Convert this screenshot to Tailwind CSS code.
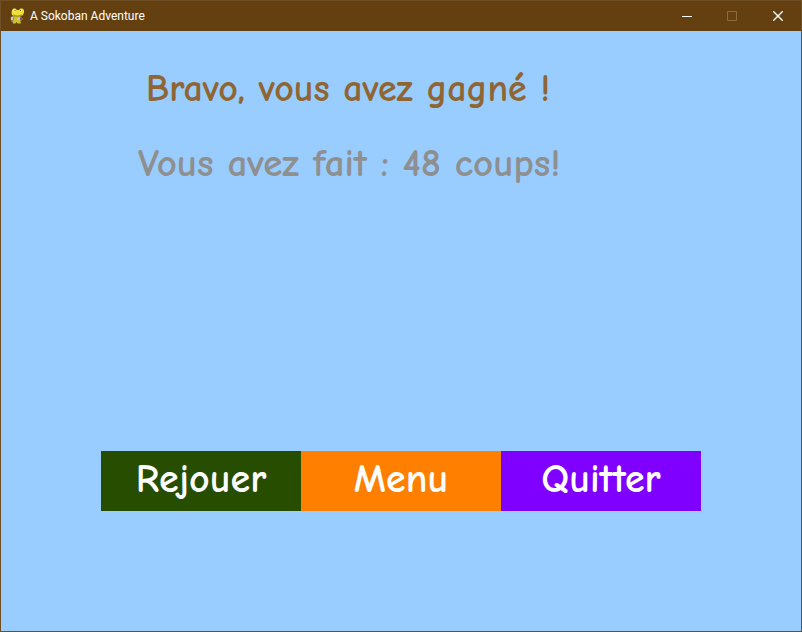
<!DOCTYPE html>
<html lang="fr">
<head>
<meta charset="utf-8">
<meta name="viewport" content="width=device-width, initial-scale=1">
<title>A Sokoban Adventure</title>
<script src="https://cdn.jsdelivr.net/npm/@tailwindcss/browser@4"></script>
</head>
<body class="min-h-screen flex flex-col border border-[#6f4f26] bg-[#99ccff] font-['Comic_Sans_MS','Comic_Neue','Open_Sans',sans-serif]">
  <header class="h-[30px] shrink-0 flex items-center bg-[#643f0f] text-white font-['Segoe_UI','Roboto',sans-serif]">
    <svg class="w-4 h-4 ml-2 shrink-0" viewBox="0 0 16 16" aria-hidden="true">
      <path d="M3 8 1.500 10 2 13l3 1.500 6-1 3-2-1-2z" fill="#8b8672"/>
      <path d="M4.500 8H11l1 2-1 2 1 3.500H8.500l-1-1.500-1 1.500H4l-.5-2L5 12z" fill="#cfc02c"/>
      <path d="M3 2 4.500.5 6.500.5 8 2h2L11.500.5h2L15 2v2.500L14 7l-3 1.500H6L3 7 2.500 5z" fill="#f0de35"/>
      <path d="M4 6.500 8 7.500l5.500-1L12.500 8 9 9 5 8.500z" fill="#a8951c"/>
      <path d="M4.500 1.500h2v2h-2zM11 1.500h2v2h-2z" fill="#fffbd0"/>
      <path d="M5.500 2h1v1h-1zM11 2h1v1h-1z" fill="#58522b"/>
      <path d="M2 9h2v3H2zM8.500 10h2v2h-2z" fill="#c9c9c9"/>
      <path d="M11 9.500h2v2.500h-2z" fill="#675e68"/>
      <path d="M13 10h1v2h-1z" fill="#a85538"/>
    </svg>
    <h1 class="ml-[5px] text-[12px] leading-4 grow whitespace-nowrap">A Sokoban Adventure</h1>
    <button type="button" aria-label="Réduire" class="w-[45px] h-full flex items-center justify-center">
      <svg class="w-[10px] h-[10px]" viewBox="0 0 10 10"><path d="M0 5h10v1H0z" fill="#fff"/></svg>
    </button>
    <button type="button" aria-label="Agrandir" disabled class="w-[46px] h-full flex items-center justify-center">
      <svg class="w-[10px] h-[10px]" viewBox="0 0 10 10"><path d="M.5.5h9v9h-9z" fill="none" stroke="#8a6a42"/></svg>
    </button>
    <button type="button" aria-label="Fermer" class="w-[46px] h-full flex items-center justify-center">
      <svg class="w-[10px] h-[10px]" viewBox="0 0 10 10"><path d="m.3.3 9.400 9.400m0-9.400L.3 9.700" fill="none" stroke="#fff" stroke-width="1.400"/></svg>
    </button>
  </header>
  <main class="grow flex flex-col justify-between pt-8 pb-[120px]">
    <div class="flex flex-col gap-[23px] text-[38px] leading-[52px] whitespace-nowrap font-bold [font-feature-settings:'liga'_0,'dlig'_0,'calt'_0]">
      <p class="pl-[145px] text-[#8f6633]">Bravo, vous avez gagné !</p>
      <p class="pl-[137px] text-[39px] text-[#8f8f8f]">Vous avez fait : 48 coups!</p>
    </div>
    <nav class="mx-[100px] grid grid-cols-3 text-[40px] leading-[52px] font-bold text-white [font-feature-settings:'liga'_0,'dlig'_0,'calt'_0]">
      <button type="button" class="h-[60px] pb-1 bg-[#264d00]">Rejouer</button>
      <button type="button" class="h-[60px] pb-1 bg-[#ff8000]">Menu</button>
      <button type="button" class="h-[60px] pb-1 bg-[#8000ff]">Quitter</button>
    </nav>
  </main>
</body>
</html>
